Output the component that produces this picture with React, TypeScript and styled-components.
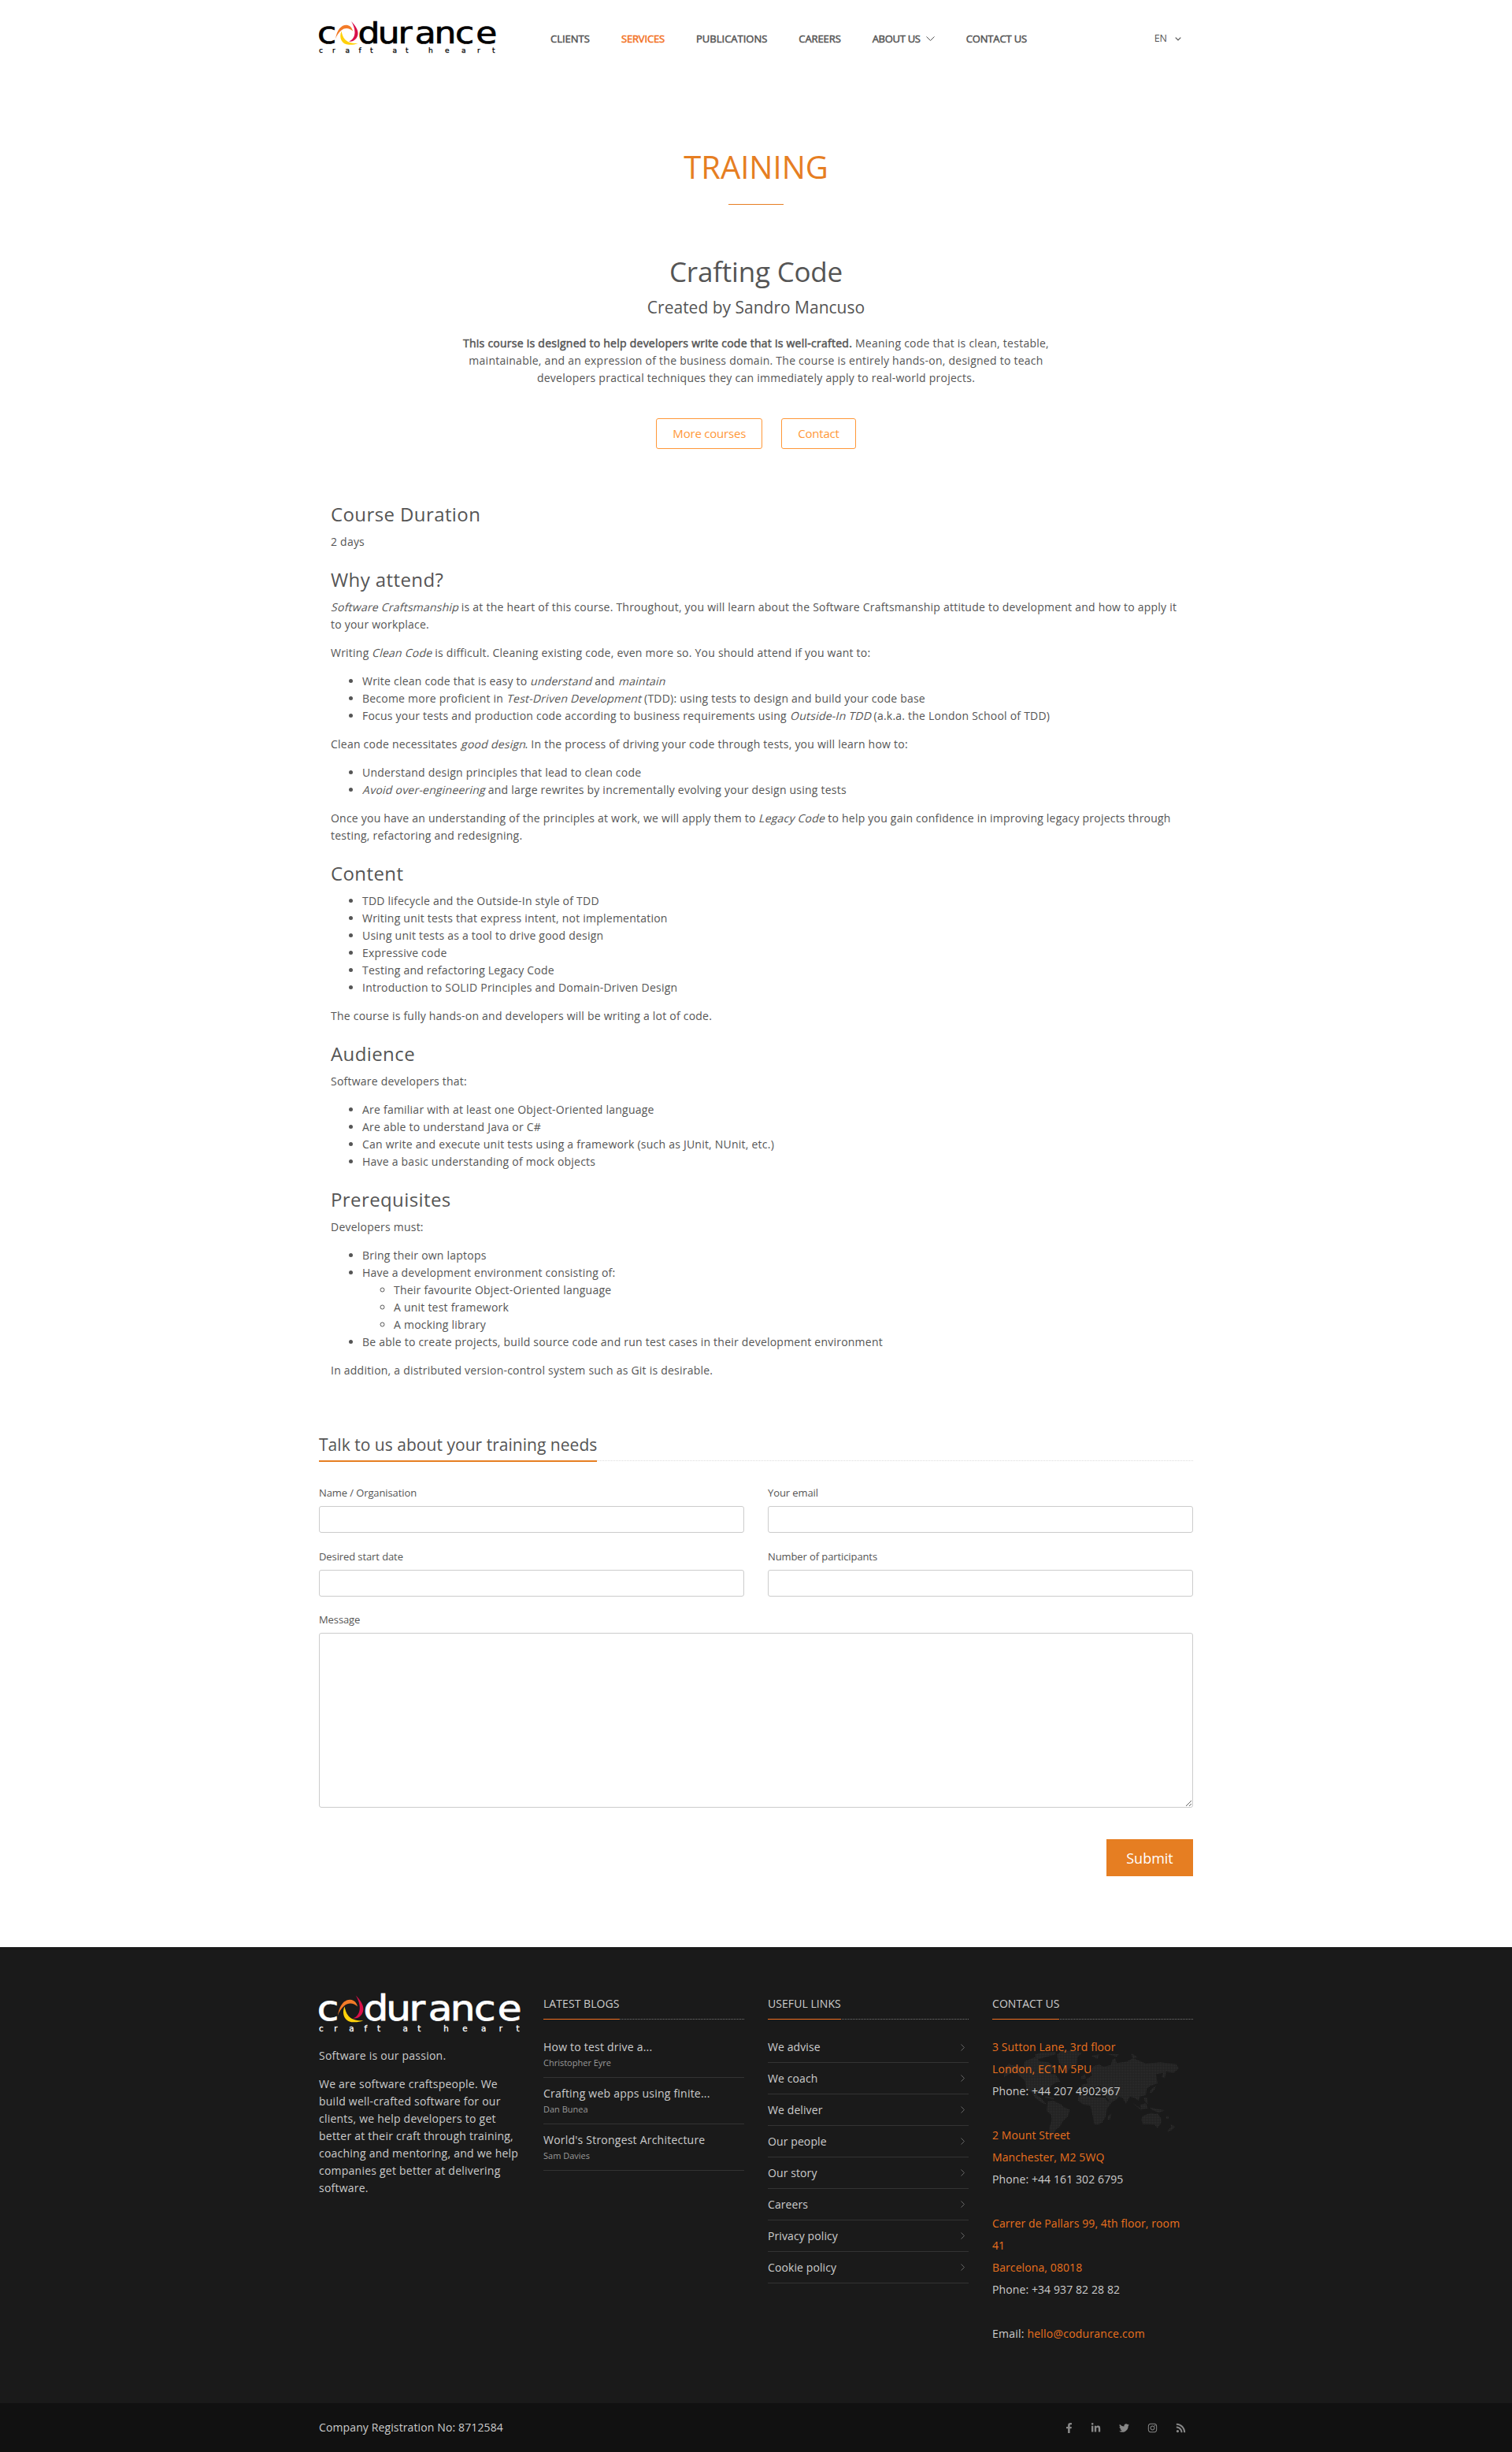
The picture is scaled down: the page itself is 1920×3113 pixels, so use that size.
import React from "react";
import styled, { createGlobalStyle, css } from "styled-components";
import { FaFacebookF, FaLinkedinIn, FaTwitter, FaInstagram, FaRss } from "react-icons/fa";

const Global = createGlobalStyle`
  *, *::before, *::after { box-sizing: border-box; }
  body { margin: 0; background: #fff; color: #555; font: 14px/22px "Open Sans", sans-serif; }
  p { margin: 0 0 14px; }
  a { color: inherit; text-decoration: none; }
`;

const faux = css`-webkit-text-stroke: 0.5px currentColor;`;
const Container = styled.div`width: 1110px; margin: 0 auto;`;

const Header = styled(Container)`display: flex; height: 98px; padding-top: 26px; align-items: flex-start;`;
const Nav = styled.nav`display: flex; gap: 40px; margin: 12px 0 0 70px; flex: 1;`;
const NavLink = styled.a<{ $active?: boolean; $track?: number }>`
  ${faux} display: flex; align-items: center; font-size: 13px; line-height: 22px; white-space: nowrap;
  letter-spacing: ${(p) => p.$track ?? 0}px;
  color: ${(p) => (p.$active ? "#f37021" : "#555")};
`;
const NavArrow = styled.svg`margin-left: 7px;`;
const Lang = styled.div`display: flex; align-items: center; gap: 10px; margin: 12px 15px 0 0; font-size: 12.5px;`;

const Hero = styled.section`display: flex; flex-direction: column; align-items: center; text-align: center;`;
const PageTitle = styled.h1`margin: 84px 0 0; font-size: 40px; line-height: 60px; font-weight: 400; color: #e67e22;`;
const Rule = styled.div`width: 70px; height: 1px; margin-top: 17px; background: #e67e22;`;
const CourseTitle = styled.h2`margin: 60px 0 0; font-size: 35px; line-height: 49px; font-weight: 400; letter-spacing: -0.2px;`;
const Author = styled.h3`margin: 8px 0 21px; font-size: 21px; line-height: 27px; font-weight: 400;`;
const Intro = styled.p`width: 765px; margin: 0; letter-spacing: 0.25px;`;
const Strong = styled.strong`${faux} font-weight: 400;`;
const Buttons = styled.div`display: flex; gap: 24px; margin-top: 40px;`;
const OutlineButton = styled.a`
  display: block; height: 39px; padding: 0 20px; border: 1px solid #ff9838; border-radius: 3px;
  color: #ff9838; font-size: 15px; line-height: 37px; letter-spacing: -0.2px;
`;

const Article = styled.article`width: 1080px; margin: 60px auto 0; letter-spacing: 0.225px;`;
const H = styled.h4`margin: 0 0 11px; padding-top: 9px; font-size: 24px; line-height: 27px; font-weight: 400; letter-spacing: 0.4px;`;
const Tracked = styled.p`letter-spacing: 0.22px;`;
const List = styled.ul<{ $nested?: boolean }>`margin: 0 0 ${(p) => (p.$nested ? 0 : 14)}px; padding-left: 40px;`;
const Em = styled.em`display: inline-block; font-style: normal; transform: skewX(-14deg); transform-origin: 50% 75%;`;

const FormSection = styled(Container)`margin-top: 63px;`;
const FormHeading = styled.div`display: flex; align-items: flex-start; border-bottom: 1px dotted #ddd; height: 41px; margin-bottom: 29px;`;
const FormTitle = styled.h3`
  flex: none; margin: 0; height: 42px; border-bottom: 2px solid #e67e22;
  font-size: 21px; line-height: 40px; font-weight: 400; letter-spacing: 0.03px;
`;
const FormGrid = styled.form`display: grid; grid-template-columns: 1fr 1fr; gap: 18.5px 30px;`;
const Field = styled.label<{ $wide?: boolean }>`
  display: flex; flex-direction: column; gap: 5px; font-size: 13px; line-height: 23px; letter-spacing: -0.1px;
  grid-column: ${(p) => (p.$wide ? "1 / -1" : "auto")};
`;
const Input = styled.input`height: 34px; border: 1px solid #ccc; border-radius: 3px; background: #fff;`;
const Message = styled.textarea`display: block; height: 222px; border: 1px solid #ccc; border-radius: 3px;`;
const Submit = styled.button`
  grid-column: 2; justify-self: end; margin-top: 21.5px; width: 110px; height: 47px; border: 0; padding: 0;
  background: #e67e22; color: #fff; font: 18px "Open Sans", sans-serif;
`;

const Footer = styled.footer`margin-top: 90px; background: #1a1a1a; color: #ccc; height: 579px; padding-top: 60px;`;
const Columns = styled(Container)`display: grid; grid-template-columns: repeat(4, 255px); gap: 30px;`;
const About = styled.div`padding-top: 20px; letter-spacing: 0.23px;`;
const ColHead = styled.div`display: flex; align-items: flex-start; border-bottom: 1px dotted #777; height: 32px; margin-bottom: 24px;`;
const ColTitle = styled.h4`
  flex: none; margin: 0; height: 32px; border-bottom: 1px solid #f37021;
  font-size: 14px; line-height: 24px; font-weight: 400; color: #ccc; letter-spacing: 0.06px;
`;
const Post = styled.div`
  height: 59px; padding-top: 9px; border-bottom: 1px solid #333; letter-spacing: 0.22px;
  &:nth-child(2) { height: 50px; padding-top: 0; }
`;
const PostAuthor = styled.div`font-size: 11px; line-height: 18px; color: #999; letter-spacing: 0;`;
const LinkRow = styled.a`
  display: flex; justify-content: space-between; align-items: center; height: 40px; padding-right: 5px;
  border-bottom: 1px solid #333; letter-spacing: 0.1px;
  &:nth-child(2) { height: 31px; padding-bottom: 8px; }
`;
const Contact = styled.div`position: relative; line-height: 28px; margin-top: -3px;`;
const Address = styled.div<{ $track?: number }>`position: relative; margin-bottom: 28px; letter-spacing: ${(p) => p.$track ?? 0.1}px;`;
const Accent = styled.a`color: #e9711f;`;
const MapArt = styled.svg`position: absolute; left: 15px; top: 15px;`;

const Bottom = styled.div`background: #111; height: 62px; color: #ccc;`;
const BottomRow = styled(Container)`display: flex; justify-content: space-between; align-items: center; height: 62px; letter-spacing: 0.12px;`;
const Social = styled.div`
  display: flex; align-items: center; gap: 23px; padding-right: 9px; color: #888;
  svg:first-child { margin-right: -2px; }
`;

const LogoArt = styled.svg`display: block; flex: none;`;

const Logo = ({ width, height, ink }: { width: number; height: number; ink: string }) => (
  <LogoArt width={width} height={height} viewBox="0 0 224 41" preserveAspectRatio="none" overflow="visible" fontFamily="'DejaVu Sans', sans-serif" fill={ink}>
    <g transform="scale(1.158 1)" fontSize="38" stroke={ink} strokeWidth="0.7">
      <text x="-1.7" y="28.8">c</text>
      <text x="42.8 64.6 86.8 105.2 126.5 149.5 172" y="28.8">durance</text>
    </g>
    <text x="0 17 33.5 50.6 65 75 93.5 110 120 139 160 181 201 220" y="41" fontSize="9" stroke={ink} strokeWidth="0.25">craft at heart</text>
    <path d="M21 23.500C23 11 29 5.500 35 5.800C39 6 42 9 43 13.500C39 9.500 33 8.500 28.500 12.500C25 15.500 22.500 19 21 23.500Z" fill="#f37b28" />
    <path d="M41 1C46 6 50 12 49.500 17C49 23 44 27.500 38 26.500C43 25 45.500 20 45.500 15C45.500 10 43.500 5 41 1Z" fill="#d9104a" />
    <path d="M28.500 13.500C25 22 29 30.500 38 30.800C42 31 46 30.500 49.500 29C42 29.500 36 27.500 33 24C30 20.500 29.500 17 28.500 13.500Z" fill="#ffd10a" />
  </LogoArt>
);

const land = [
  "878,412 882,375 895,360 905,366 945,372 950,350 985,335 1000,350 1030,355 1060,375 1045,385 1040,400 1055,400 1072,428 1055,432 1040,445 1030,465 1010,460 995,468 990,480 1005,490 1012,500 1025,515 1010,510 985,490 975,470 955,455 950,425 930,405 915,385 895,400",
  "1065,350 1060,325 1075,312 1120,310 1145,320 1130,335 1128,365 1105,375 1095,395 1088,380 1070,360",
  "985,325 1005,318 1055,315 1055,325 1020,335 990,345",
  "1128,372 1148,372 1145,380 1130,380",
  "1028,505 1045,500 1075,515 1082,525 1104,535 1098,560 1080,580 1070,600 1055,612 1045,640 1033,635 1035,600 1042,575 1040,555 1025,540",
  "1020,484 1050,490 1048,496 1020,490",
  "1135,480 1160,477 1170,485 1225,490 1235,505 1250,505 1232,530 1228,560 1215,585 1200,592 1188,590 1185,570 1180,545 1175,520 1150,515 1132,500",
  "1235,560 1247,550 1242,572 1234,574",
  "1145,455 1145,440 1165,435 1160,420 1180,405 1175,390 1185,370 1205,362 1220,372 1245,365 1250,345 1260,340 1265,358 1300,352 1320,340 1335,345 1365,360 1415,355 1470,362 1478,378 1460,395 1435,390 1430,415 1420,410 1425,395 1400,400 1405,435 1380,445 1368,455 1365,480 1345,485 1340,500 1325,490 1310,485 1297,512 1285,490 1272,485 1265,495 1245,510 1230,490 1222,475 1195,475 1190,462 1215,455 1210,445 1185,450 1160,450 1155,465 1138,465",
  "1143,410 1155,400 1160,415 1145,420",
  "1178,330 1205,325 1200,342",
  "1228,322 1272,325 1265,334",
  "1315,320 1337,335 1320,340",
  "1378,470 1385,455 1400,445 1395,458 1385,472",
  "1320,510 1352,540 1345,528",
  "1345,518 1365,510 1372,530 1350,534",
  "1380,527 1430,538 1410,547 1385,535",
  "1358,488 1370,490 1372,515 1362,505",
  "1350,575 1352,562 1370,552 1385,548 1400,552 1405,548 1418,570 1418,585 1405,605 1395,592 1375,590 1355,590",
  "1450,590 1465,600 1455,612 1440,620 1442,612 1452,602",
  "1435,560 1443,560 1443,570 1435,570",
];

const WorldMap = () => (
  <MapArt width="224" height="116" viewBox="0 0 224 116">
    <defs>
      <pattern id="dots" width="2" height="2" patternUnits="userSpaceOnUse">
        <rect width="2" height="2" fill="#222" /><rect width="1" height="1" fill="#303030" />
      </pattern>
      <clipPath id="land">
        {land.map((points) => <polygon key={points} points={points} transform="translate(-325 -100) scale(0.36996 0.33333)" />)}
      </clipPath>
    </defs>
    <rect width="224" height="116" fill="url(#dots)" clipPath="url(#land)" />
  </MapArt>
);

const blogs = [["How to test drive a...", "Christopher Eyre"], ["Crafting web apps using finite...", "Dan Bunea"], ["World's Strongest Architecture", "Sam Davies"]];
const links = ["We advise", "We coach", "We deliver", "Our people", "Our story", "Careers", "Privacy policy", "Cookie policy"];

const ColHeading = ({ children }: { children: React.ReactNode }) => <ColHead><ColTitle>{children}</ColTitle></ColHead>;

export default function App() {
  return (
    <>
      <Global />
      <Header>
        <Logo width={224} height={41} ink="#000" />
        <Nav>
          <NavLink>CLIENTS</NavLink><NavLink $active $track={-0.15}>SERVICES</NavLink><NavLink>PUBLICATIONS</NavLink><NavLink $track={-0.1}>CAREERS</NavLink>
          <NavLink $track={-0.3}>ABOUT US<NavArrow width="11" height="7" viewBox="0 0 11 7" fill="none" stroke="#555"><path d="M.5.5l5 5 5-5" /></NavArrow></NavLink>
          <NavLink $track={-0.15}>CONTACT US</NavLink>
        </Nav>
        <Lang>EN<svg width="8" height="5" viewBox="0 0 8 5" fill="none" stroke="#555" strokeWidth="1.2"><path d="M.7.7L4 4L7.3.7" /></svg></Lang>
      </Header>
      <Hero>
        <PageTitle>TRAINING</PageTitle>
        <Rule />
        <CourseTitle>Crafting Code</CourseTitle>
        <Author>Created by Sandro Mancuso</Author>
        <Intro><Strong>This course is designed to help developers write code that is well-crafted.</Strong> Meaning code that is clean, testable, maintainable, and an expression of the business domain. The course is entirely hands-on, designed to teach developers practical techniques they can immediately apply to real-world projects.</Intro>
        <Buttons><OutlineButton>More courses</OutlineButton><OutlineButton>Contact</OutlineButton></Buttons>
      </Hero>
      <Article>
        <H>Course Duration</H>
        <p>2 days</p>
        <H>Why attend?</H>
        <p><Em>Software Craftsmanship</Em> is at the heart of this course. Throughout, you will learn about the Software Craftsmanship attitude to development and how to apply it to your workplace.</p>
        <p>Writing <Em>Clean Code</Em> is difficult. Cleaning existing code, even more so. You should attend if you want to:</p>
        <List>
          <li>Write clean code that is easy to <Em>understand</Em> and <Em>maintain</Em></li>
          <li>Become more proficient in <Em>Test-Driven Development</Em> (TDD): using tests to design and build your code base</li>
          <li>Focus your tests and production code according to business requirements using <Em>Outside-In TDD</Em> (a.k.a. the London School of TDD)</li>
        </List>
        <p>Clean code necessitates <Em>good design</Em>. In the process of driving your code through tests, you will learn how to:</p>
        <List>
          <li>Understand design principles that lead to clean code</li>
          <li><Em>Avoid over-engineering</Em> and large rewrites by incrementally evolving your design using tests</li>
        </List>
        <Tracked>Once you have an understanding of the principles at work, we will apply them to <Em>Legacy Code</Em> to help you gain confidence in improving legacy projects through testing, refactoring and redesigning.</Tracked>
        <H>Content</H>
        <List>
          <li>TDD lifecycle and the Outside-In style of TDD</li>
          <li>Writing unit tests that express intent, not implementation</li>
          <li>Using unit tests as a tool to drive good design</li>
          <li>Expressive code</li>
          <li>Testing and refactoring Legacy Code</li>
          <li>Introduction to SOLID Principles and Domain-Driven Design</li>
        </List>
        <p>The course is fully hands-on and developers will be writing a lot of code.</p>
        <H>Audience</H>
        <p>Software developers that:</p>
        <List>
          <li>Are familiar with at least one Object-Oriented language</li>
          <li>Are able to understand Java or C#</li>
          <li>Can write and execute unit tests using a framework (such as JUnit, NUnit, etc.)</li>
          <li>Have a basic understanding of mock objects</li>
        </List>
        <H>Prerequisites</H>
        <p>Developers must:</p>
        <List>
          <li>Bring their own laptops</li>
          <li>Have a development environment consisting of:
            <List $nested>
              <li>Their favourite Object-Oriented language</li>
              <li>A unit test framework</li>
              <li>A mocking library</li>
            </List>
          </li>
          <li>Be able to create projects, build source code and run test cases in their development environment</li>
        </List>
        <p>In addition, a distributed version-control system such as Git is desirable.</p>
      </Article>
      <FormSection>
        <FormHeading><FormTitle>Talk to us about your training needs</FormTitle></FormHeading>
        <FormGrid>
          <Field>Name / Organisation<Input /></Field>
          <Field>Your email<Input /></Field>
          <Field>Desired start date<Input /></Field>
          <Field>Number of participants<Input /></Field>
          <Field $wide>Message<Message /></Field>
          <Submit type="button">Submit</Submit>
        </FormGrid>
      </FormSection>
      <Footer>
        <Columns>
          <div>
            <Logo width={255} height={47} ink="#fff" />
            <About><p>Software is our passion.</p><p>We are software craftspeople. We build well-crafted software for our clients, we help developers to get better at their craft through training, coaching and mentoring, and we help companies get better at delivering software.</p></About>
          </div>
          <div><ColHeading>LATEST BLOGS</ColHeading>{blogs.map(([t, a]) => <Post key={t}>{t}<PostAuthor>{a}</PostAuthor></Post>)}</div>
          <div><ColHeading>USEFUL LINKS</ColHeading>{links.map((l) => <LinkRow key={l}>{l}<svg width="5" height="9" viewBox="0 0 5 9" fill="none" stroke="#666"><path d="M.5.5l4 4-4 4" /></svg></LinkRow>)}</div>
          <div><ColHeading>CONTACT US</ColHeading>
            <Contact>
              <WorldMap />
              <Address><Accent>3 Sutton Lane, 3rd floor<br />London, EC1M 5PU</Accent><br />Phone: +44 207 4902967</Address>
              <Address><Accent>2 Mount Street<br />Manchester, M2 5WQ</Accent><br />Phone: +44 161 302 6795</Address>
              <Address><Accent>Carrer de Pallars 99, 4th floor, room 41<br />Barcelona, 08018</Accent><br />Phone: +34 937 82 28 82</Address>
              <Address $track={0.22}>Email: <Accent>hello@codurance.com</Accent></Address>
            </Contact>
          </div>
        </Columns>
      </Footer>
      <Bottom><BottomRow><span>Company Registration No: 8712584</span><Social><FaFacebookF size={13} /><FaLinkedinIn size={13} /><FaTwitter size={13} /><FaInstagram size={13} /><FaRss size={13} /></Social></BottomRow></Bottom>
    </>
  );
}
